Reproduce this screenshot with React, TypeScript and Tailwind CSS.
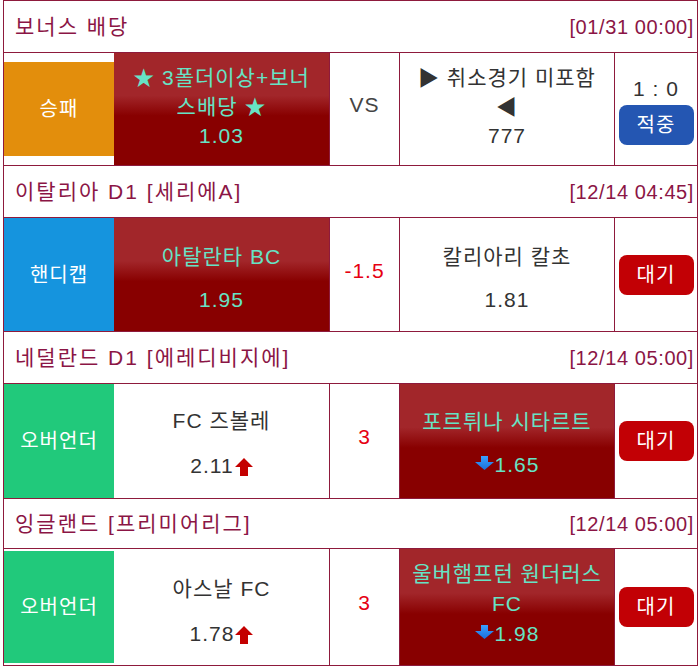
import React from "react";

const RED = "bg-[linear-gradient(to_bottom,#a2262a_0%,#a2262a_38%,#880000_56%,#880000_100%)] text-[#66e3c5]";

function UpArrow() {
  return (
    <svg width="18" height="18" viewBox="0 0 18 18" className="ml-[1px] mt-[3px]">
      <polygon points="9,0 18,9 13,9 13,18 5,18 5,9 0,9" fill="#c40000" />
    </svg>
  );
}

function DownArrow() {
  return (
    <svg width="19" height="14" viewBox="0 0 19 14" className="mr-[1px] mb-[4px]">
      <defs>
        <linearGradient id="bd" x1="0" y1="0" x2="0" y2="1">
          <stop offset="0" stopColor="#3aa0ff" />
          <stop offset="1" stopColor="#1a6fdc" />
        </linearGradient>
      </defs>
      <polygon points="6,0 13,0 13,6 19,6 9.5,14 0,6 6,6" fill="url(#bd)" />
    </svg>
  );
}

function Header({ title, date, h }: { title: string; date: string; h: string }) {
  return (
    <div className={`${h} flex items-center justify-between border-b border-[#8e1a3c] pl-[11px] pr-[3px] text-[#8b1545]`}>
      <span className="text-[21px] tracking-[2px]">{title}</span>
      <span className="text-[20px] tracking-[0.6px]">{date}</span>
    </div>
  );
}

function Btn({ label, blue }: { label: string; blue?: boolean }) {
  return (
    <div
      className={`w-[75px] h-[40px] rounded-[8px] flex items-center justify-center text-white text-[20px] tracking-[1px] ${
        blue ? "bg-[#2456b2]" : "bg-[#c20005]"
      }`}
    >
      {label}
    </div>
  );
}

export default function App() {
  const row = "grid grid-cols-[110px_216px_70px_215px_82px] border-b border-[#8e1a3c]";
  const b = "border-r border-[#8e1a3c]";
  const mid = `${b} flex items-center justify-center pb-[8px] text-[21px] tracking-[1px]`;
  const cell = "px-[10px] text-center text-[21px] leading-[29px] tracking-[1px]";
  const cat = "text-white text-[20px] tracking-[1px] flex items-center justify-center";
  return (
    <div className="w-[699px] h-[668px] bg-white font-['Liberation_Sans','Noto_Sans_CJK_KR',sans-serif]">
      <div className="ml-[3px] w-[695px] border border-[#8e1a3c]">
        <Header title="보너스 배당" date="[01/31 00:00]" h="h-[52px]" />
        <div className={`${row} h-[113px]`}>
          <div className="flex items-center">
            <div className={`w-full h-[94px] bg-[#e38e0c] ${cat}`}>승패</div>
          </div>
          <div className={`${b} ${RED} ${cell} pt-[10px]`}>
            <div>★ 3폴더이상+보너스배당 ★</div>
            <div>1.03</div>
          </div>
          <div className={`${mid} text-[#444]`}>VS</div>
          <div className={`${b} ${cell} pt-[10px] text-[#333]`}>
            <div>▶ 취소경기 미포함 ◀</div>
            <div>777</div>
          </div>
          <div className="flex flex-col items-center justify-center">
            <div className="text-[21px] leading-[29px] text-[#333] mb-[2px] tracking-[1px]">1 : 0</div>
            <Btn label="적중" blue />
          </div>
        </div>

        <Header title="이탈리아 D1 [세리에A]" date="[12/14 04:45]" h="h-[52px]" />
        <div className={`${row} h-[114px]`}>
          <div className={`bg-[#1594de] ${cat}`}>핸디캡</div>
          <div className={`${b} ${RED} ${cell} pt-[24px]`}>
            <div>아탈란타 BC</div>
            <div className="mt-[14px]">1.95</div>
          </div>
          <div className={`${mid} text-[#e60012]`}>-1.5</div>
          <div className={`${b} ${cell} pt-[24px] text-[#333]`}>
            <div>칼리아리 칼초</div>
            <div className="mt-[14px]">1.81</div>
          </div>
          <div className="flex items-center justify-center">
            <Btn label="대기" />
          </div>
        </div>

        <Header title="네덜란드 D1 [에레디비지에]" date="[12/14 05:00]" h="h-[52px]" />
        <div className={`${row} h-[115px]`}>
          <div className={`bg-[#21c97b] ${cat}`}>오버언더</div>
          <div className={`${b} ${cell} pt-[22px] text-[#333]`}>
            <div>FC 즈볼레</div>
            <div className="mt-[16px] flex items-center justify-center">
              <span>2.11</span>
              <UpArrow />
            </div>
          </div>
          <div className={`${mid} text-[#e60012]`}>3</div>
          <div className={`${b} ${RED} ${cell} pt-[23px]`}>
            <div>포르튀나 시타르트</div>
            <div className="mt-[14px] flex items-center justify-center">
              <DownArrow />
              <span>1.65</span>
            </div>
          </div>
          <div className="flex items-center justify-center">
            <Btn label="대기" />
          </div>
        </div>

        <Header title="잉글랜드 [프리미어리그]" date="[12/14 05:00]" h="h-[50px]" />
        <div className="grid grid-cols-[110px_216px_70px_215px_82px] h-[116px]">
          <div className={`bg-[#21c97b] ${cat} my-[2px]`}>오버언더</div>
          <div className={`${b} ${cell} pt-[25px] text-[#333]`}>
            <div>아스날 FC</div>
            <div className="mt-[16px] flex items-center justify-center">
              <span>1.78</span>
              <UpArrow />
            </div>
          </div>
          <div className={`${mid} text-[#e60012]`}>3</div>
          <div className={`${b} ${RED} px-[10px] pt-[10px] text-center text-[21px] tracking-[1px]`}>
            <div className="leading-[30px]">울버햄프턴 원더러스 FC</div>
            <div className="leading-[29px] flex items-center justify-center">
              <DownArrow />
              <span>1.98</span>
            </div>
          </div>
          <div className="flex items-center justify-center">
            <Btn label="대기" />
          </div>
        </div>
      </div>
    </div>
  );
}
